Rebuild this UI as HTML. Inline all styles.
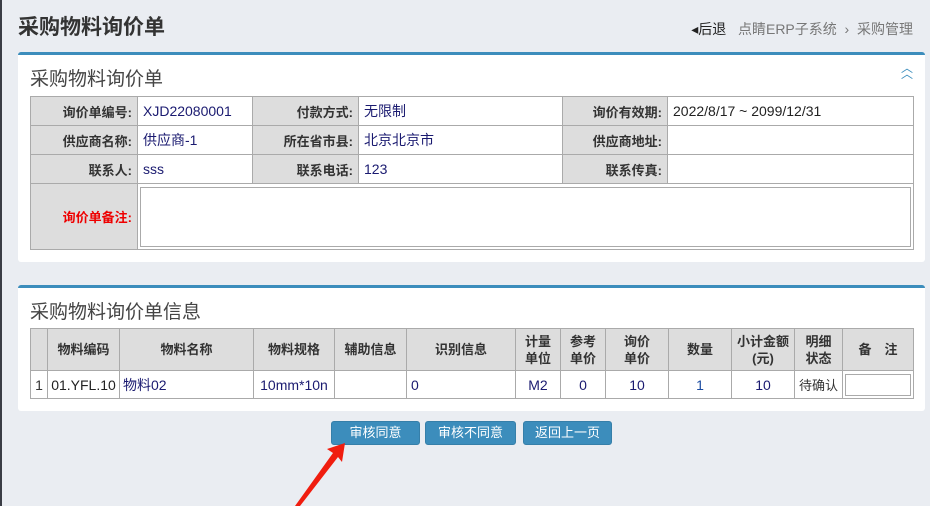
<!DOCTYPE html>
<html><head><meta charset="utf-8"><style>
*{margin:0;padding:0;box-sizing:border-box}
body{width:930px;height:506px;background:#eaedf2;font-family:"Liberation Sans","Noto Sans CJK SC",sans-serif;position:relative;overflow:hidden;color:#333}
.lb{position:absolute;left:0;top:0;width:2px;height:506px;background:#3a3d45}
.h1{position:absolute;left:18px;top:11px;font-size:21px;font-weight:bold;color:#333}
.bc{position:absolute;right:17px;top:19px;font-size:14px;color:#777}
.bc b{font-weight:normal;color:#222}
.panel{position:absolute;left:18px;width:907px;background:#fff;border-top:3px solid #3c8dbc;border-radius:3px}
.pt{position:absolute;left:12px;font-size:19px;color:#444}
table{position:absolute;border-collapse:collapse;font-size:13px}
td{border:1px solid #aaa;padding:0 5px}
.l{background:#ddd;font-weight:bold;text-align:right;color:#333}
.v{color:#1a1a70;font-size:14px}
.t2 td{text-align:center;color:#1a1a70;font-size:14px}
.t2 tr:first-child td{background:#ddd;font-weight:bold;color:#333;line-height:17px;padding:0;font-size:13px}
.btn{position:absolute;top:421px;height:24px;background:#3c8dbc;border:1px solid #367fa9;border-radius:3px;color:#fff;font-size:13px;text-align:center;line-height:22px}
</style></head><body>
<div class="lb"></div>
<div class="h1">采购物料询价单</div>
<div class="bc"><b>◂后退</b>&nbsp;&nbsp;&nbsp;点睛ERP子系统 &nbsp;›&nbsp; 采购管理</div>
<div class="panel" style="top:52px;height:210px">
<div class="pt" style="top:9px">采购物料询价单</div>
<div style="position:absolute;right:12px;top:10px;color:#3c8dbc;font-size:12px;line-height:6px">︿<br>︿</div>
</div>
<table style="left:30px;top:96px;width:884px">
<tr style="height:29px"><td class="l" style="width:107px">询价单编号:</td><td class="v" style="width:115px">XJD22080001</td><td class="l" style="width:106px">付款方式:</td><td class="v" style="width:204px">无限制</td><td class="l" style="width:105px">询价有效期:</td><td class="v" style="color:#222">2022/8/17 ~ 2099/12/31</td></tr>
<tr style="height:29px"><td class="l">供应商名称:</td><td class="v">供应商-1</td><td class="l">所在省市县:</td><td class="v">北京北京市</td><td class="l">供应商地址:</td><td></td></tr>
<tr style="height:29px"><td class="l">联系人:</td><td class="v">sss</td><td class="l">联系电话:</td><td class="v">123</td><td class="l">联系传真:</td><td></td></tr>
<tr style="height:66px"><td class="l" style="color:#e00">询价单备注:</td><td colspan="5" style="padding:2px"><div style="height:60px;border:1px solid #aaa"></div></td></tr>
</table>
<div class="panel" style="top:285px;height:126px">
<div class="pt" style="top:9px">采购物料询价单信息</div>
</div>
<table class="t2" style="left:30px;top:328px;width:884px">
<tr style="height:42px"><td style="width:17px"></td><td style="width:72px">物料编码</td><td style="width:134px">物料名称</td><td style="width:81px">物料规格</td><td style="width:72px">辅助信息</td><td style="width:109px">识别信息</td><td style="width:45px">计量<br>单位</td><td style="width:45px">参考<br>单价</td><td style="width:63px">询价<br>单价</td><td style="width:63px">数量</td><td style="width:63px">小计金额<br>(元)</td><td style="width:48px">明细<br>状态</td><td>备　注</td></tr>
<tr style="height:28px"><td style="padding:0;color:#333">1</td><td style="padding:0;color:#222">01.YFL.10</td><td style="text-align:left;padding:0 3px">物料02</td><td style="padding:0;white-space:nowrap;overflow:hidden">10mm*10n</td><td></td><td style="text-align:left;padding:0 4px">0</td><td>M2</td><td>0</td><td>10</td><td style="color:#1a4aa0">1</td><td>10</td><td style="padding:0;color:#333;font-size:13px">待确认</td><td style="padding:2px"><div style="height:22px;border:1px solid #aaa"></div></td></tr>
</table>
<div class="btn" style="left:331px;width:89px">审核同意</div>
<div class="btn" style="left:425px;width:91px">审核不同意</div>
<div class="btn" style="left:523px;width:89px">返回上一页</div>
<svg style="position:absolute;left:0;top:0" width="930" height="506"><polygon points="345,443 327,449 333,453 295,506 300,506 338,457 342,462" fill="#f01d0f"/></svg>
</body></html>
